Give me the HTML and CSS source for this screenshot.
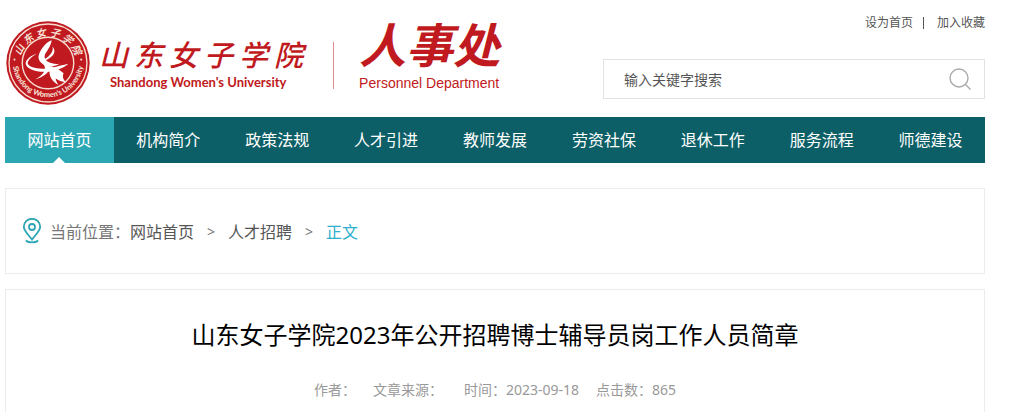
FILE: index.html
```html
<!DOCTYPE html>
<html lang="zh-CN">
<head>
<meta charset="utf-8">
<title>山东女子学院人事处</title>
<link rel="stylesheet" href="styles.css">
</head>
<body>
<header class="header">
  <a class="brand" href="#">
    <svg class="emblem" viewBox="22 22 248 248" aria-hidden="true">
      <defs>
        <path id="arc-top" d="M62 150a84 84 0 0 1 168 0"/>
        <path id="arc-bottom" d="M42 143a104 104 0 0 0 208 0"/>
      </defs>
      <circle cx="146" cy="146" r="123" fill="#c01a20"/>
      <circle cx="146" cy="146" r="115" fill="none" stroke="#f6dfd0" stroke-width="4"/>
      <circle cx="146" cy="146" r="76" fill="none" stroke="#f6dfd0" stroke-width="4"/>
      <circle cx="47" cy="136" r="3" fill="#f6dfd0"/>
      <circle cx="244" cy="136" r="3" fill="#f6dfd0"/>
      <text class="emblem-cn"><textPath href="#arc-top" startOffset="50%" text-anchor="middle">山 东 女 子 学 院</textPath></text>
      <text class="emblem-en"><textPath href="#arc-bottom" startOffset="50%" text-anchor="middle">Shandong Women's University</textPath></text>
      <g fill="#fff">
        <path d="M157 79C143 83 127 101 120 119C115 132 120 143 133 151C145 159 164 158 180 148C158 151 139 143 136 130C134 116 153 105 157 79Z"/>
        <path d="M159 97C164 112 151 124 139 133L127 141C141 139 165 126 165 111C165 105 162 101 159 97Z"/>
        <path d="M112 119C98 128 86 138 86 147C88 157 108 163 129 163C153 163 171 155 207 148C191 161 166 172 135 172C105 172 82 161 80 148C80 136 96 124 112 119Z"/>
        <path d="M134 151C144 168 128 184 108 194C131 188 145 176 151 165C158 186 174 200 200 203C190 195 188 185 192 176L179 166L158 157Z"/>
        <path d="M151 164C148 184 156 200 177 211C170 202 168 194 169 186Z"/>
      </g>
    </svg>
    <span class="school">
      <span class="school-cn"><span>山</span><span>东</span><span>女</span><span>子</span><span>学</span><span>院</span></span>
      <span class="school-en">Shandong Women's University</span>
    </span>
    <span class="dept">
      <span class="dept-cn">人事处</span>
      <span class="dept-en">Personnel Department</span>
    </span>
  </a>
  <div class="tools">
    <div class="quick"><a href="#">设为首页</a><a href="#">加入收藏</a></div>
    <form class="search" role="search">
      <input class="search-input" type="text" aria-label="输入关键字搜索" placeholder="输入关键字搜索">
      <button class="search-button" type="button" aria-label="搜索">
        <svg width="22" height="22" viewBox="0 0 22 22" fill="none" stroke="#aaa" stroke-width="1.4"><circle cx="10" cy="10" r="9"/><path d="M16 16l5.500 5.500"/></svg>
      </button>
    </form>
  </div>
</header>
<nav>
  <ul class="nav">
    <li><a class="active" href="#">网站首页</a></li>
    <li><a href="#">机构简介</a></li>
    <li><a href="#">政策法规</a></li>
    <li><a href="#">人才引进</a></li>
    <li><a href="#">教师发展</a></li>
    <li><a href="#">劳资社保</a></li>
    <li><a href="#">退休工作</a></li>
    <li><a href="#">服务流程</a></li>
    <li><a href="#">师德建设</a></li>
  </ul>
</nav>
<div class="crumbs">
  <svg class="pin" width="20" height="26" viewBox="0 0 20 26" fill="none" stroke="#2ba7b4" stroke-width="1.800"><path d="M10 21.500C7 17.500 1.800 13 1.800 8.800a8.200 8 0 0 1 16.400 0C18.200 13 13 17.500 10 21.500Z"/><circle cx="10" cy="9" r="3"/><path d="M3.800 22.500c2.800 2.600 9.600 2.600 12.400 0"/></svg>
  <span>当前位置：</span><a href="#">网站首页</a><span class="sep">&gt;</span><a href="#">人才招聘</a><span class="sep">&gt;</span><a class="current" href="#">正文</a>
</div>
<main class="article">
  <h1 class="title">山东女子学院2023年公开招聘博士辅导员岗工作人员简章</h1>
  <div class="meta"><span>作者：</span><span>文章来源：</span><span class="time">时间：2023-09-18</span><span>点击数：865</span></div>
</main>
</body>
</html>
```

FILE: styles.css
```css
* { box-sizing: border-box; }
body {
  display: flex;
  flex-direction: column;
  min-height: 100vh;
  margin: 0;
  padding: 0 28px 0 5px;
  background: #fff;
  color: #555;
  font-family: "Noto Sans", "Noto Sans CJK SC", sans-serif;
  font-size: 16px;
}
a { color: inherit; text-decoration: none; }

.header {
  display: flex;
  justify-content: space-between;
  height: 117px;
}
.brand {
  display: flex;
  align-items: flex-start;
  padding: 21px 0 0 1px;
  color: #c01a20;
}
.emblem { width: 84px; height: 84px; }
.emblem-cn { font: italic 700 30px "Noto Sans CJK SC", sans-serif; fill: #f6dfd0; }
.emblem-en { font: 900 22px Lato, sans-serif; fill: #f6dfd0; }
.school {
  display: flex;
  flex-direction: column;
  padding: 14px 0 0 9px;
}
.school-cn {
  display: flex;
  gap: 6px;
  font: italic 500 29px/36px "Noto Sans CJK SC", sans-serif;
}
.school-en {
  padding-left: 11px;
  font: 700 13px/22px Lato, sans-serif;
}
.dept {
  display: flex;
  flex-direction: column;
  margin-left: 30px;
  padding-left: 26px;
  background: linear-gradient(#dc8d90, #dc8d90) 0 21px / 1px 47px no-repeat;
}
.dept-cn {
  padding-bottom: 8px;
  font: italic 700 47px/44px "Noto Sans CJK SC", sans-serif;
}
.dept-en { font: 14px/20px "Liberation Sans", sans-serif; }

.tools { width: 382px; padding-top: 14px; }
.quick {
  display: flex;
  justify-content: flex-end;
  align-items: center;
  height: 18px;
  margin-bottom: 27px;
  font-size: 12px;
  line-height: 12px;
}
.quick a + a {
  margin-left: 10px;
  padding-left: 13px;
  border-left: 1px solid #555;
}
.search {
  display: flex;
  height: 40px;
  border: 1px solid #e3e3e3;
}
.search-input {
  flex: 1;
  min-width: 0;
  padding: 0 20px;
  border: 0;
  outline: 0;
  background: none;
  font: inherit;
  font-size: 14px;
}
.search-input::placeholder { color: #555; opacity: 1; }
.search-button {
  display: flex;
  align-items: center;
  padding: 0 13px;
  border: 0;
  background: none;
}

.nav {
  display: grid;
  grid-template-columns: repeat(9, 1fr);
  margin: 0;
  padding: 0;
  background: #0d5f67;
  list-style: none;
}
.nav a {
  display: block;
  position: relative;
  color: #fff;
  line-height: 46px;
  text-align: center;
}
.nav .active { background: #2ba7b4; }
.nav .active::after {
  content: "";
  position: absolute;
  bottom: 0;
  left: 50%;
  margin-left: -6px;
  border: 6px solid transparent;
  border-top: 0;
  border-bottom-color: #fff;
}

.crumbs {
  display: flex;
  align-items: center;
  height: 86px;
  margin: 25px 0 15px;
  padding-left: 16px;
  border: 1px solid #ececec;
  color: #777;
}
.crumbs a { color: #555; }
.crumbs .current { color: #2fafce; }
.pin { margin-right: 8px; }
.sep { width: 34px; font-size: 14px; text-align: center; }

.article {
  flex: 1;
  border: 1px solid #ececec;
  border-bottom: 0;
  text-align: center;
}
.title {
  margin: 24px 0;
  color: #000;
  font-size: 24px;
  font-weight: 400;
  line-height: 42px;
}
.meta {
  display: flex;
  justify-content: center;
  gap: 17px;
  color: #999;
  font-size: 14px;
  line-height: 20px;
}
.time { margin-left: 4px; }
```
